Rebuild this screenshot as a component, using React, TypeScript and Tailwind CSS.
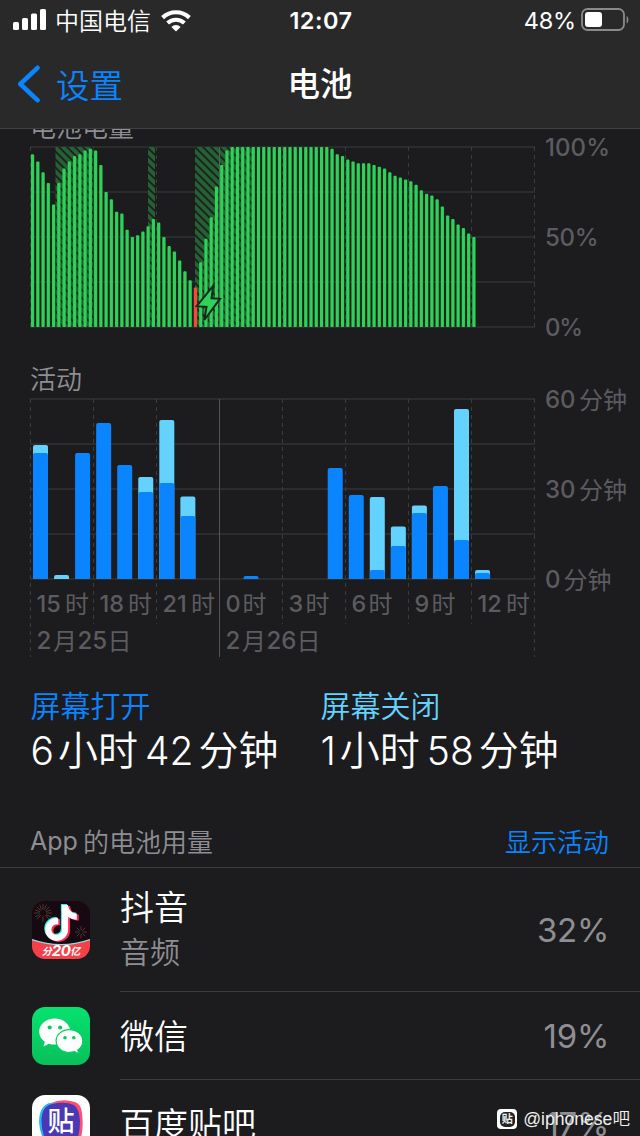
import type { ReactNode } from 'react'
import { FaTiktok } from 'react-icons/fa'

const FONT = "font-['Inter','Noto_Sans_CJK_SC',sans-serif]"

const BATTERY_LEVELS = [
  96, 92, 86, 80, 68, 80, 88, 92, 95, 96, 98, 99, 98, 90, 75, 71, 64, 63, 54, 50, 51, 53,
  56, 60, 58, 50, 45, 42, 37, 31, 26, 22, 36, 49, 61, 78, 90, 98, 100, 100, 100, 100, 100,
  100, 100, 100, 100, 100, 100, 100, 100, 100, 100, 100, 100, 100, 100, 99, 96, 95, 93, 92,
  91, 91, 91, 90, 89, 88, 86, 84, 83, 82, 81, 79, 76, 74, 73, 71, 67, 62, 60, 57, 55, 52, 50,
]

// [x, width] of the periods the phone was plugged in
const CHARGING = [
  [55.5, 38],
  [148, 7],
  [195, 60],
]

interface Hour {
  slot: number
  on: number
  total: number
}

const ACTIVITY: Hour[] = [
  { slot: 0, on: 42, total: 44.7 },
  { slot: 1, on: 0, total: 1.3 },
  { slot: 2, on: 42, total: 42 },
  { slot: 3, on: 52, total: 52 },
  { slot: 4, on: 38, total: 38 },
  { slot: 5, on: 29, total: 34 },
  { slot: 6, on: 32, total: 53 },
  { slot: 7, on: 21, total: 27.5 },
  { slot: 10, on: 1, total: 1 },
  { slot: 14, on: 37, total: 37 },
  { slot: 15, on: 28, total: 28 },
  { slot: 16, on: 3, total: 27.3 },
  { slot: 17, on: 11, total: 17.5 },
  { slot: 18, on: 22, total: 24.5 },
  { slot: 19, on: 31, total: 31 },
  { slot: 20, on: 13, total: 56.7 },
  { slot: 21, on: 2, total: 3 },
]

const HOURS = ['15', '18', '21', '0', '3', '6', '9', '12']
const COLUMNS = [0, 1, 2, 3, 4, 5, 6, 7, 8]

function StatusBar() {
  return (
    <div className="flex h-10 items-center justify-between pl-[13px] pr-[11px] text-white">
      <div className="flex w-[200px] items-center">
        <svg width="34" height="22" viewBox="0 0 34 22" fill="#fff">
          <rect x="0" y="13" width="6" height="8" rx="1.5" />
          <rect x="9" y="9" width="6" height="12" rx="1.5" />
          <rect x="18" y="4.5" width="6" height="16.5" rx="1.5" />
          <rect x="27" y="0" width="6" height="21" rx="1.5" />
        </svg>
        <span className="ml-[8px] pt-[3px] text-[24px] font-[350] leading-[38px]">中国电信</span>
        <svg className="ml-[10px] mt-px" width="30" height="22" viewBox="0 0 30 22" fill="none" stroke="#fff">
          <path d="M1.6 7.6a19.5 19.5 0 0 1 26.8 0" strokeWidth="4.2" />
          <path d="M6.6 13a12.2 12.2 0 0 1 16.8 0" strokeWidth="4" />
          <path d="M15 21.6l-4.6-4.7a6.6 6.6 0 0 1 9.2 0z" fill="#fff" stroke="none" />
        </svg>
      </div>
      <span className="mt-[2px] text-[23.5px] font-semibold tracking-[0.5px]">12:07</span>
      <div className="flex w-[200px] items-center justify-end">
        <span className="mt-[2px] text-[23.5px] tracking-[-0.2px]">48%</span>
        <svg className="ml-[5px]" width="48" height="24" viewBox="0 0 48 24">
          <rect x="1" y="1" width="42" height="21" rx="5.5" fill="none" stroke="#8a8a8b" strokeWidth="1.8" />
          <rect x="4" y="4" width="17" height="15" rx="3" fill="#fff" />
          <path d="M45.6 8c2.4 1 2.4 6.500 0 7.500z" fill="#8a8a8b" />
        </svg>
      </div>
    </div>
  )
}

function NavBar() {
  return (
    <div className="grid h-[88px] grid-cols-3 items-center pl-[17px] pr-[17px]">
      <div className="flex items-center text-[#0a84ff]">
        <svg width="24" height="38" viewBox="0 0 24 38" fill="none" stroke="currentColor" strokeWidth="4.6" strokeLinecap="round" strokeLinejoin="round">
          <path d="M20.500 2.800L3.300 19l17.200 16.200" />
        </svg>
        <span className="ml-[15px] pt-[3px] text-[33.5px] font-[350] leading-[44px]">设置</span>
      </div>
      <h1 className="pt-[2px] text-center text-[32.5px] font-medium leading-[44px] text-white">电池</h1>
    </div>
  )
}

function BatteryChart() {
  return (
    <svg className="block overflow-visible" width="640" height="196" viewBox="0 140 640 196">
      <defs>
        <pattern id="stripes" width="8" height="8" patternUnits="userSpaceOnUse">
          <rect width="8" height="8" fill="#246134" />
          <path d="M-2 -2L10 10M-2 6L2 10M6 -2L10 2" stroke="#1c1f1e" strokeWidth="1.8" />
        </pattern>
      </defs>
      {[147, 192, 237, 282, 327].map((y) => (
        <rect key={y} x="30" y={y - 1} width="505" height="2" fill="#2c2c2e" />
      ))}
      {COLUMNS.map((c) => (
        <line key={c} x1={30.5 + c * 63} x2={30.5 + c * 63} y1="147" y2="327" stroke="#3c3c3f" strokeDasharray="4 4" />
      ))}
      {CHARGING.map(([x, w]) => (
        <rect key={x} x={x} y="147" width={w} height="180" fill="url(#stripes)" />
      ))}
      <line x1="219.5" x2="219.5" y1="147" y2="327" stroke="#4b6a53" />
      {BATTERY_LEVELS.map((level, i) => {
        const x = 31 + i * 5.254
        const y = 327 - level * 1.8
        return (
          <g key={i}>
            <rect x={x - 0.2} y={y + 1} width="3.7" height={level * 1.8 - 1} fill="#1d6a31" opacity={0.6} />
            <rect x={x} y={y} width="3.1" height={level * 1.8} rx="0.8" fill={i === 31 ? '#ff453a' : '#30d158'} />
          </g>
        )
      })}
      <path
        d="M213.300 285.700L196.700 306.200L206.500 307L204.300 320L220 298.800L211.500 298.300Z"
        fill="#30d158"
        stroke="#16291c"
        strokeWidth="2"
        strokeLinejoin="miter"
      />
      <g fill="#5b5b60" fontSize="24" fontWeight="500">
        <text x="545" y="156" textLength="65">100%</text>
        <text x="545" y="246" textLength="53.500">50%</text>
        <text x="545" y="336" textLength="38">0%</text>
      </g>
    </svg>
  )
}

function ActivityChart() {
  return (
    <svg className="block overflow-visible" width="640" height="272" viewBox="0 390 640 272">
      {[399, 444, 489, 534, 579].map((y) => (
        <rect key={y} x="30" y={y - 1} width="505" height="2" fill="#2c2c2e" />
      ))}
      {COLUMNS.map((c) => (
        <line
          key={c}
          x1={30.5 + c * 63}
          x2={30.5 + c * 63}
          y1="399"
          y2={c === 0 || c === 3 || c === 8 ? 657 : 624}
          stroke={c === 3 ? '#545457' : '#3c3c3f'}
          strokeDasharray={c === 3 ? undefined : '4 4'}
        />
      ))}
      {ACTIVITY.map(({ slot, on, total }) => {
        const x = 33 + slot * 21.05
        const top = 579 - total * 3
        const split = 579 - on * 3
        return (
          <g key={slot}>
            {total > on && (
              <path d={`M${x} 579V${top + 2}q0-2 2-2h11q2 0 2 2V579z`} fill="#64d2ff" />
            )}
            {on > 0 && (
              <path d={`M${x} 579V${split + 2}q0-2 2-2h11q2 0 2 2V579z`} fill="#0a84ff" />
            )}
          </g>
        )
      })}
      <g fill="#5b5b60" fontSize="24" fontWeight="500">
        {HOURS.map((hour, i) => (
          <g key={hour}>
            <text x={36.5 + i * 63} y="612" fontSize="23.5">{hour}</text>
            <text x={(hour.length > 1 ? 65 : 53.5) + i * 63} y="613" fontWeight="400">时</text>
          </g>
        ))}
        {['25', '26'].map((day, i) => (
          <g key={day}>
            <text x={36.5 + i * 189} y="648.500">2</text>
            <text x={53 + i * 189} y="649.500" fontWeight="400">月</text>
            <text x={77.5 + i * 189} y="648.500">{day}</text>
            <text x={107.5 + i * 189} y="649.500" fontWeight="400">日</text>
          </g>
        ))}
        <text x="545" y="408">60</text>
        <text x="579" y="408.500" fontWeight="400">分钟</text>
        <text x="545" y="498">30</text>
        <text x="579" y="498.500" fontWeight="400">分钟</text>
        <text x="545" y="588">0</text>
        <text x="563.500" y="588.500" fontWeight="400">分钟</text>
      </g>
    </svg>
  )
}

function Duration({ label, color, hours, minutes }: { label: string; color: string; hours: string; minutes: string }) {
  return (
    <div className="w-[290px]">
      <div className={`text-[30px] font-[350] leading-[38px] ${color}`}>{label}</div>
      <div className="flex items-center text-[40px] font-[350] leading-[52px] text-white">
        <span className="text-[39px]">{hours}</span>
        <span className="ml-[4px]">小时</span>
        <span className="ml-[7px] text-[39px]">{minutes}</span>
        <span className="ml-[5px]">分钟</span>
      </div>
    </div>
  )
}

function DouyinIcon() {
  return (
    <div className="relative h-[58px] w-[58px] overflow-hidden rounded-[13px] bg-[#170911]">
      <svg className="absolute inset-0" width="58" height="58" viewBox="0 0 58 58">
        <g stroke="#5e453a" strokeWidth="0.8" strokeLinecap="round">
          <path d="M11 3.500v5M11 15.500v5M2.500 12h5M14.500 12h5M5 6l3.500 3.500M13.500 14.500L17 18M17 6l-3.500 3.500M8.500 14.500L5 18M7.800 4l1.500 4M14.200 4l-1.500 4M3.500 9l4 1.500M18.500 9l-4 1.500M3.500 15.500l4-1.500M18.500 15.500l-4-1.500" />
          <path d="M49 25.500v3.500M49 33.500V37M43.500 31H47M51 31h3.500M45 27l2.500 2.500M50.500 32.500L53 35M53 27l-2.500 2.500M47.500 32.500L45 35" />
        </g>
        <path d="M0 38.500q29 10 58 0V58H0z" fill="#f5404a" />
        <path d="M0 38.500q29 10 58 0" fill="none" stroke="#8adfe6" strokeWidth="1.200" />
      </svg>
      <FaTiktok className="absolute left-[11.500px] top-[3px] h-[36px] w-[32px] text-[#25f4ee]" />
      <FaTiktok className="absolute left-[14.500px] top-[5px] h-[36px] w-[32px] text-[#fe2c55]" />
      <FaTiktok className="absolute left-[13px] top-[4px] h-[36px] w-[32px] text-white" />
      <div className="absolute inset-x-0 bottom-0 flex h-[16px] items-center justify-center font-bold italic text-white">
        <span className="text-[10px]">分</span>
        <span className="text-[15px] tracking-[-0.5px]">20</span>
        <span className="text-[10px]">亿</span>
      </div>
    </div>
  )
}

function WeChatIcon() {
  return (
    <svg width="58" height="58" viewBox="0 0 58 58">
      <defs>
        <linearGradient id="wechat" x1="0" y1="0" x2="0" y2="1">
          <stop offset="0" stopColor="#05e36f" />
          <stop offset="1" stopColor="#0abf5b" />
        </linearGradient>
      </defs>
      <rect width="58" height="58" rx="13" fill="url(#wechat)" />
      <path d="M22.800 11.500C14 11.500 7.200 17.300 7.200 24.800c0 4.200 2.200 7.600 5.600 10l-1.300 4.600 5.300-2.700c1.900.6 3.900.9 6 .9 8.700 0 15.600-5.600 15.600-12.800S31.500 11.500 22.800 11.500z" fill="#fff" />
      <path
        d="M37.400 22.600c-7.400 0-13.300 5-13.300 11.400s5.900 11.400 13.300 11.400c1.900 0 3.600-.3 5.200-.8l4.300 2.400-1.100-3.900c3.100-2.100 5-5.400 5-9.100 0-6.400-6-11.400-13.400-11.400z"
        fill="#fff"
        stroke="#08cd63"
        strokeWidth="1.200"
      />
      <g fill="#09c864">
        <circle cx="17.700" cy="20.500" r="2.100" />
        <circle cx="28.200" cy="20.500" r="2.100" />
        <circle cx="33" cy="30.800" r="1.800" />
        <circle cx="41.800" cy="30.800" r="1.800" />
      </g>
    </svg>
  )
}

function TiebaIcon() {
  return (
    <div className="relative h-[58px] w-[58px] overflow-hidden rounded-[13px] bg-white">
      <svg className="absolute inset-0" width="58" height="58" viewBox="0 0 58 58">
        <path d="M19 8Q30 3 43 7Q49 9 50 18Q52 34 48 46Q40 54 22 50z" fill="#fb5073" />
        <path d="M7 27Q7 12 17 8L34 9L44 52H18Q8 44 7 27z" fill="#21b8fb" />
        <path d="M9.500 25Q10 11 20 9Q33 6 42 10Q47 13 48 26Q48 42 42 51H18Q9.500 42 9.500 25z" fill="#4a38b4" />
      </svg>
      <span className="absolute left-[15.500px] top-[11px] text-[27px] font-medium leading-[32px] text-white">贴</span>
    </div>
  )
}

interface AppRowProps {
  icon: ReactNode
  name: string
  note?: string
  percent: string
  height: string
}

function AppRow({ icon, name, note, percent, height }: AppRowProps) {
  return (
    <div className={`flex pl-8 ${height}`}>
      <div className="flex w-[88px] shrink-0 items-center">{icon}</div>
      <div className="flex flex-1 items-center justify-between border-b border-[#3d3d41] pr-[31px]">
        <div className={note ? '-mt-px' : 'pt-[2px]'}>
          <div className="text-[34px] font-[350] leading-[45px] text-white">{name}</div>
          {note && <div className="text-[30px] font-[350] leading-[44px] text-[#8e8e93]">{note}</div>}
        </div>
        <span className="pt-[2px] text-[33px] tracking-[-0.300px] text-[#8e8e93]">{percent}</span>
      </div>
    </div>
  )
}

function Watermark() {
  return (
    <div className="absolute bottom-[4px] right-[10px] flex items-center gap-[6px] font-['Liberation_Sans','Noto_Sans_CJK_SC',sans-serif] font-[350] text-[#f0f0f0]">
      <span className="flex h-5 w-5 items-center justify-center rounded-[4px] bg-white">
        <span className="flex h-[15px] w-[15px] items-center justify-center rounded-[5px] bg-[#242426] text-[11px] font-bold leading-none">贴</span>
      </span>
      <span className="text-[17.600px] leading-[26px]">@iphonese吧</span>
    </div>
  )
}

export default function App() {
  return (
    <div className={`relative h-[1136px] w-[640px] overflow-hidden bg-[#1c1c1e] ${FONT}`}>
      <header className="relative z-10 h-[129px] border-b border-[#414144] bg-[#29292a]">
        <StatusBar />
        <NavBar />
      </header>

      <main>
        <h2 className="-mt-[13px] pl-[30px] text-[26px] font-[350] leading-[24px] text-[#8e8e93]">电池电量</h2>
        <BatteryChart />
        <h2 className="mt-[34px] pl-[30px] text-[26px] font-[350] leading-[20px] text-[#8e8e93]">活动</h2>
        <ActivityChart />

        <section className="mt-[25px] flex pl-[30.500px]">
          <Duration label="屏幕打开" color="text-[#0a84ff]" hours="6" minutes="42" />
          <Duration label="屏幕关闭" color="text-[#64d2ff]" hours="1" minutes="58" />
        </section>

        <div className="mt-[40px] flex h-[51px] items-center justify-between border-b border-[#3d3d41] pl-[30px] pr-[31px] text-[26px] font-[350]">
          <span className="flex items-center text-[#8e8e93]">
            <span className="text-[25px] font-normal">App</span>
            <span className="ml-[5px]">的电池用量</span>
          </span>
          <button className="text-[#0a84ff]">显示活动</button>
        </div>
        <AppRow icon={<DouyinIcon />} name="抖音" note="音频" percent="32%" height="h-[124px]" />
        <AppRow icon={<WeChatIcon />} name="微信" percent="19%" height="h-[88px]" />
        <AppRow icon={<TiebaIcon />} name="百度贴吧" percent="17%" height="h-[88px]" />
      </main>

      <Watermark />
    </div>
  )
}
